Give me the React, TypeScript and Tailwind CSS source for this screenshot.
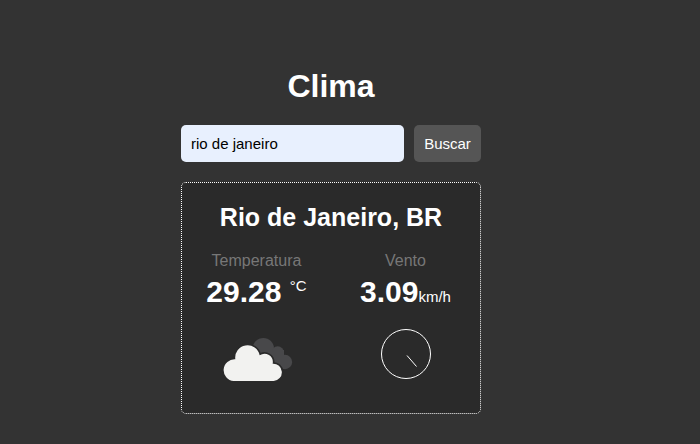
function CloudIcon() {
  return (
    <svg className="block h-[70px] w-[100px]" viewBox="-9 0 300 210">
      <g fill="#48484a">
        <circle cx="160" cy="71" r="32" />
        <circle cx="203" cy="83" r="19" />
        <circle cx="225" cy="111" r="21.5" />
        <path d="M150 75H222V132H150Z" />
      </g>
      <g fill="#f2f2f0" stroke="#2a2a2a" strokeWidth="10" paintOrder="stroke">
        <path d="M71 168a32.500 32.500 0 0 1 5-65A37 37 0 0 1 149 91A25 25 0 0 1 188 116A26 26 0 0 1 191 168Z" />
      </g>
    </svg>
  );
}

function WindDial() {
  return (
    <svg className="block h-[50px] w-[50px]" viewBox="0 0 50 50" fill="none" stroke="#fff">
      <circle cx="25" cy="25" r="24.5" />
      <path d="M26 26.500L35.500 37.500" />
    </svg>
  );
}

export default function App() {
  return (
    <main className="h-[444px] bg-[#333] pl-[181px] pt-[68px] font-['Liberation_Sans',Arial,sans-serif] text-white">
      <div className="w-[300px]">
        <h1 className="text-center text-[32px] font-bold leading-[37px]">Clima</h1>
        <form className="mt-5 flex gap-2.5" onSubmit={(e) => e.preventDefault()}>
          <input
            type="search"
            defaultValue="rio de janeiro"
            className="h-[37px] min-w-0 flex-1 appearance-none rounded-[5px] bg-[#e8f0fe] px-2.5 text-[15px] text-black outline-none"
          />
          <button className="h-[37px] w-[67px] rounded-[5px] bg-[#555] pt-0.5 text-[15px]">Buscar</button>
        </form>
        <section className="mt-5 h-[232px] rounded-[5px] border border-dotted border-white bg-[#2a2a2a] pt-5">
          <h2 className="text-center text-[25px] font-bold leading-[29px]">Rio de Janeiro, BR</h2>
          <div className="mt-5 grid grid-cols-2 text-center">
            <div>
              <div className="text-base leading-[18px] text-[#777]">Temperatura</div>
              <div className="whitespace-nowrap text-[30px] font-bold leading-[43px]">
                29.28 <sup className="-top-[11px] align-baseline text-[15px] font-normal leading-none">°C</sup>
              </div>
              <div className="mt-3 flex justify-center">
                <CloudIcon />
              </div>
            </div>
            <div>
              <div className="text-base leading-[18px] text-[#777]">Vento</div>
              <div className="whitespace-nowrap text-[30px] font-bold leading-[43px]">
                3.09<span className="text-[15px] font-normal">km/h</span>
              </div>
              <div className="mt-[11px] flex justify-center">
                <WindDial />
              </div>
            </div>
          </div>
        </section>
      </div>
    </main>
  );
}
